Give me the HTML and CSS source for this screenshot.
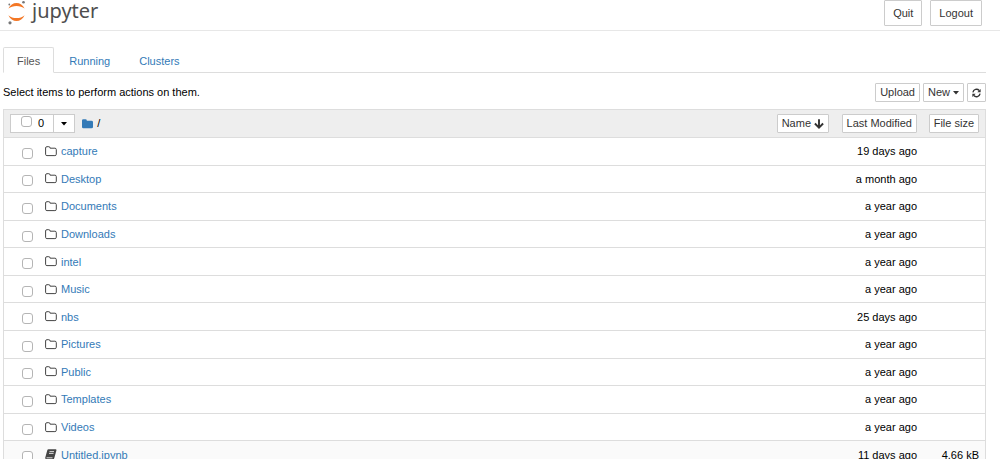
FILE: index.html
```html
<!DOCTYPE html>
<html lang="en">

<head>
    <meta charset="UTF-8">
    <meta name="viewport" content="width=device-width, initial-scale=1.0">
    <title>Home Page - Jupyter</title>
    <link rel="stylesheet" href="styles.css">
</head>

<body>
    <!-- icons used more than once -->
    <svg class="icon-defs" aria-hidden="true">
        <symbol id="folder-open" viewBox="0 0 12 11">
            <path d="M.6 2Q.6.7 1.9.7H3.8Q5.1.7 5.1 2V2.2H9.9Q11.3 2.2 11.3 3.6V8.3Q11.3 9.6 9.9 9.6H1.9Q.6 9.6.6 8.3Z" fill="none" stroke="#444" stroke-width="1"/>
        </symbol>
        <symbol id="caret" viewBox="0 0 6 4">
            <path d="M0 0H6L3 3.5Z" fill="currentColor"/>
        </symbol>
    </svg>

    <header class="header">
        <a class="logo" href="#">
            <svg class="logo-mark" viewBox="0 0 20 25" aria-hidden="true">
                <path d="M1.4 8.600C3 5 6.200 3 9.500 3S16 5 17.600 8.600C15.500 6.700 12.700 5.900 9.500 5.900S3.500 6.700 1.400 8.600Z" fill="#f37726"/>
                <path d="M1.400 15.200C3 19 6.200 21 9.500 21S16 19 17.600 15.200C15.500 17.200 12.700 18.100 9.500 18.100S3.500 17.200 1.400 15.200Z" fill="#f37726"/>
                <circle cx="16.500" cy="2.300" r="1.300" fill="#767677"/>
                <circle cx="2.300" cy="4.500" r=".9" fill="#767677"/>
                <circle cx="3" cy="22.800" r="1.600" fill="#767677"/>
            </svg>
            <span class="logo-text">jupyter</span>
        </a>
        <div class="header-buttons">
            <button type="button" class="btn">Quit</button>
            <button type="button" class="btn">Logout</button>
        </div>
    </header>

    <main class="container">
        <nav class="tabs">
            <a class="tab active" href="#">Files</a>
            <a class="tab" href="#">Running</a>
            <a class="tab" href="#">Clusters</a>
        </nav>

        <div class="toolbar">
            <p class="info">Select items to perform actions on them.</p>
            <div class="toolbar-buttons">
                <button type="button" class="btn btn-xs">Upload</button>
                <button type="button" class="btn btn-xs">New <svg class="caret"><use href="#caret"/></svg></button>
                <button type="button" class="btn btn-xs" aria-label="Refresh">
                    <svg class="icon-refresh" viewBox="0 0 10 10" aria-hidden="true">
                        <path d="M1 4.200A4.100 4.100 0 0 1 8 2.200M9 5.800A4.100 4.100 0 0 1 2 7.800" fill="none" stroke="currentColor" stroke-width="1.500"/>
                        <path d="M9.600.5V4.200H5.900ZM.4 9.500V5.800H4.100Z" fill="currentColor"/>
                    </svg>
                </button>
            </div>
        </div>

        <table class="file-list">
            <thead>
                <tr>
                    <th class="name-col">
                        <div class="list-header">
                            <div class="selector">
                                <label class="select-all"><input type="checkbox" class="check"> <span>0</span></label>
                                <button type="button" class="select-menu" aria-label="Select menu"><svg class="caret"><use href="#caret"/></svg></button>
                            </div>
                            <a class="crumb" href="#" aria-label="Home">
                                <svg class="icon-folder" viewBox="0 0 11 10" aria-hidden="true"><path d="M0 1.500Q0 .3 1.300.3H3.500Q4.800.3 4.800 1.500V1.800H9.500Q11 1.800 11 3.200V7.900Q11 9.200 9.500 9.200H1.400Q0 9.200 0 7.900Z" fill="currentColor"/></svg>
                            </a>
                            <span class="slash">/</span>
                            <button type="button" class="btn btn-xs sort-name">Name
                                <svg class="icon-arrow" viewBox="0 0 10 10" aria-hidden="true"><path d="M5 .3V8.500M.9 4.500L5 8.600L9.100 4.500" fill="none" stroke="currentColor" stroke-width="1.900"/></svg>
                            </button>
                        </div>
                    </th>
                    <th class="date-col"><button type="button" class="btn btn-xs sort">Last Modified</button></th>
                    <th class="size-col"><button type="button" class="btn btn-xs sort">File size</button></th>
                </tr>
            </thead>
            <tbody id="files"></tbody>
        </table>
    </main>

    <script src="script.js"></script>
</body>

</html>
```
FILE: styles.css
```css
body {
    margin: 0;
    font-family: "Liberation Sans", Arial, sans-serif;
    font-size: 11px;
    line-height: 16px;
    color: #000;
    background-color: #fff;
}

a {
    color: #337ab7;
    text-decoration: none;
}

button,
input {
    font: inherit;
    margin: 0;
}

svg {
    display: block;
    flex: none;
}

.icon-defs {
    display: none;
}

/* header */
.header {
    display: flex;
    justify-content: space-between;
    align-items: flex-start;
    height: 30px;
    padding: 0 18px 0 7px;
    border-bottom: 1px solid #e7e7e7;
}

.logo {
    display: flex;
    align-items: flex-start;
    gap: 5px;
    color: #4e4e4e;
}

.logo-mark {
    width: 20px;
    height: 25px;
}

.logo-text {
    font-family: "Noto Sans", "Open Sans", sans-serif;
    font-size: 20px;
    line-height: 22px;
}

.header-buttons {
    display: flex;
    gap: 8px;
}

.btn {
    display: flex;
    align-items: center;
    gap: 3px;
    padding: 4px 8px;
    color: #333;
    background-color: #fff;
    border: 1px solid #ccc;
    border-radius: 1px;
    white-space: nowrap;
    cursor: pointer;
}

.btn-xs {
    padding: 1px 4px;
}

.caret {
    width: 6px;
    height: 4px;
}

/* tabs */
.container {
    padding: 16px 14px 0 3px;
}

.tabs {
    display: flex;
    gap: 1px;
    border-bottom: 1px solid #ddd;
}

.tab {
    padding: 5px 13px 3px;
    margin-bottom: -1px;
    border: 1px solid transparent;
    border-radius: 2px 2px 0 0;
}

.tab.active {
    color: #555;
    background-color: #fff;
    border-color: #ddd;
    border-bottom-color: #fff;
}

/* toolbar */
.toolbar {
    display: flex;
    justify-content: space-between;
    align-items: center;
    padding: 10px 0 7px;
}

.info {
    margin: 0;
}

.toolbar-buttons {
    display: flex;
    gap: 3px;
}

.toolbar,
th {
    line-height: 15px;
}

.icon-refresh {
    width: 9px;
    height: 10px;
}

/* file list */
.file-list {
    width: 100%;
    height: 360px;
    border: 1px solid #ddd;
    border-spacing: 0;
}

th,
td {
    padding: 0;
    font-weight: normal;
    text-align: right;
}

th {
    padding: 4px 0;
    background-color: #eee;
}

td {
    border-top: 1px solid #ddd;
    white-space: nowrap;
}

.notebook td {
    background-color: #fafafa;
}

.date-col {
    width: 88px;
}

.size-col {
    width: 62px;
    padding-right: 6px;
}

.list-header {
    display: flex;
    align-items: center;
    padding-left: 6px;
}

.selector {
    display: flex;
    margin-right: 7px;
    background-color: #fff;
    border: 1px solid #ccc;
}

.select-all {
    display: flex;
    gap: 6px;
    padding: 1px 9px 1px 10px;
}

.select-menu {
    padding: 0 7px;
    background: none;
    border: 0;
    border-left: 1px solid #ccc;
}

.check {
    appearance: none;
    flex: none;
    box-sizing: border-box;
    width: 11px;
    height: 11px;
    background-color: #fff;
    border: 1px solid #b5b5b5;
    border-radius: 3px;
}

.check:checked {
    background-color: #337ab7;
}

.icon-folder {
    width: 11px;
    height: 10px;
}

.icon-arrow {
    width: 10px;
    height: 10px;
}

.slash {
    margin-left: 4px;
}

.sort-name,
.sort {
    margin-left: auto;
}

.item {
    display: flex;
    align-items: center;
    padding-left: 18px;
}

.item .check {
    margin-top: 4px;
    margin-right: 12px;
}

.item-icon {
    width: 12px;
    height: 11px;
    margin-right: 4px;
}
```
FILE: script.js
```js
const files = [
    ['capture', '19 days ago'],
    ['Desktop', 'a month ago'],
    ['Documents', 'a year ago'],
    ['Downloads', 'a year ago'],
    ['intel', 'a year ago'],
    ['Music', 'a year ago'],
    ['nbs', '25 days ago'],
    ['Pictures', 'a year ago'],
    ['Public', 'a year ago'],
    ['Templates', 'a year ago'],
    ['Videos', 'a year ago'],
    ['Untitled.ipynb', '11 days ago', '4.66 kB']
];

const folderIcon = '<svg class="item-icon" aria-hidden="true"><use href="#folder-open"/></svg>';
const bookIcon = `<svg class="item-icon" viewBox="0 0 12 11" aria-hidden="true">
    <path d="M3.500.3H10.700Q11.700.4 11.400 1.500L9.300 8.900Q9 10.400 7.700 10.400H1.700Q-.1 10.200.3 8.500L2.200 1.500Q2.500.4 3.500.3Z" fill="#444"/>
    <path d="M4.500 2.600H9M4 4.400H8.500M1.500 8.800H7.500" stroke="#fff" stroke-width=".8"/>
</svg>`;

const listEl = document.querySelector('#files');

files.forEach(([name, date, size]) => {
    const isNotebook = name.endsWith('.ipynb');
    const row = document.createElement('tr');
    if (isNotebook) row.classList.add('notebook');
    row.innerHTML = `
        <td>
            <div class="item">
                <input type="checkbox" class="check" aria-label="Select ${name}">
                ${isNotebook ? bookIcon : folderIcon}
                <a href="#">${name}</a>
            </div>
        </td>
        <td>${date}</td>
        <td class="size-col">${size || ''}</td>`;
    listEl.appendChild(row);
});
```
